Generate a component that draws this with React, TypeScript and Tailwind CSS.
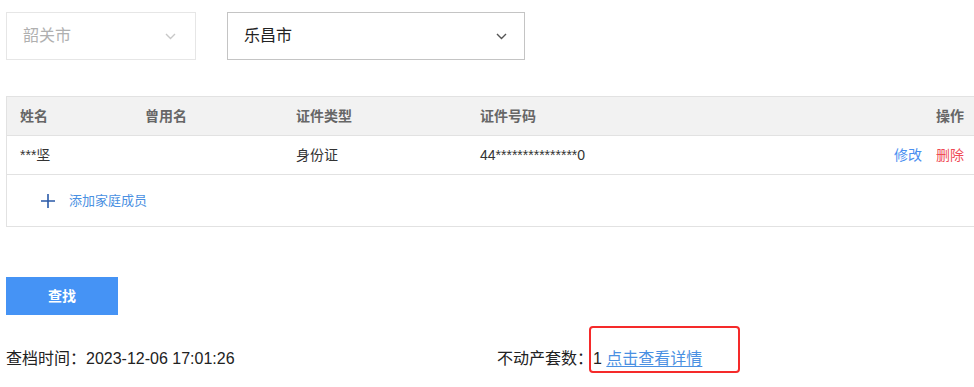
import { ReactNode } from "react";

const font = { fontFamily: '"Liberation Sans", "Noto Sans CJK SC", sans-serif' };

function Chevron({ color }: { color: string }) {
  return (
    <svg width="11" height="7" viewBox="0 0 11 7" fill="none">
      <polyline points="1,1 5.5,5.5 10,1" stroke={color} strokeWidth="1.4" />
    </svg>
  );
}

function Cell({ children, className = "" }: { children?: ReactNode; className?: string }) {
  return <div className={`pl-[13px] flex items-center ${className}`}>{children}</div>;
}

export default function App() {
  return (
    <div lang="zh-CN" className="w-[974px] h-[387px] bg-white overflow-hidden text-[#333]" style={font}>
      {/* 城市选择 */}
      <div className="flex gap-[31px] pl-[6px] pt-[12px]">
        <div className="w-[190px] h-[48px] border border-[#e6e6e6] flex items-center justify-between pl-[16px] pr-[19px]">
          <span className="text-[16px] text-[#b0b0b0]">韶关市</span>
          <Chevron color="#c8c8c8" />
        </div>
        <div className="w-[298px] h-[48px] border border-[#c4c4c4] flex items-center justify-between pl-[16px] pr-[17px]">
          <span className="text-[16px] text-[#222]">乐昌市</span>
          <Chevron color="#555" />
        </div>
      </div>

      {/* 家庭成员表格 */}
      <div className="ml-[6px] mt-[36px] border-l border-t border-b border-[#e2e2e2] text-[14px]">
        <div className="grid grid-cols-[125px_151px_184px_1fr_auto] h-[39px] bg-[#f2f2f2] border-b border-[#e2e2e2] font-bold text-[#666]">
          <Cell>姓名</Cell>
          <Cell>曾用名</Cell>
          <Cell>证件类型</Cell>
          <Cell>证件号码</Cell>
          <div className="flex items-center pr-[10px]">操作</div>
        </div>
        <div className="grid grid-cols-[125px_151px_184px_1fr_auto] h-[39px] border-b border-[#e2e2e2]">
          <Cell>***坚</Cell>
          <Cell />
          <Cell>身份证</Cell>
          <Cell>44***************0</Cell>
          <div className="flex items-center gap-[14px] pr-[10px]">
            <span className="text-[#4a8ff0]">修改</span>
            <span className="text-[#f04a55]">删除</span>
          </div>
        </div>
        <div className="h-[51px] flex items-center pl-[34px]">
          <svg width="14" height="14" viewBox="0 0 14 14">
            <path d="M7 0v14M0 7h14" stroke="#2a5aa8" strokeWidth="1.6" />
          </svg>
          <span className="ml-[14px] text-[13px] text-[#4a90e2]">添加家庭成员</span>
        </div>
      </div>

      {/* 查找按钮 */}
      <div className="pl-[6px] mt-[50px]">
        <button className="w-[112px] h-[38px] bg-[#4593f5] text-white text-[14px] font-bold">查找</button>
      </div>

      {/* 结果 */}
      <div className="flex pl-[6px] mt-[32px] text-[16px] text-[#222]">
        <div className="w-[491px]">查档时间：2023-12-06 17:01:26</div>
        <div className="flex">
          <span>不动产套数：</span>
          <span className="relative">
            1 <span className="text-[#4a90e2] underline underline-offset-2">点击查看详情</span>
            <span className="absolute left-[-4px] top-[-21px] w-[151px] h-[47px] border-2 border-[#f52a2a] rounded-[4px]" />
          </span>
        </div>
      </div>
    </div>
  );
}
